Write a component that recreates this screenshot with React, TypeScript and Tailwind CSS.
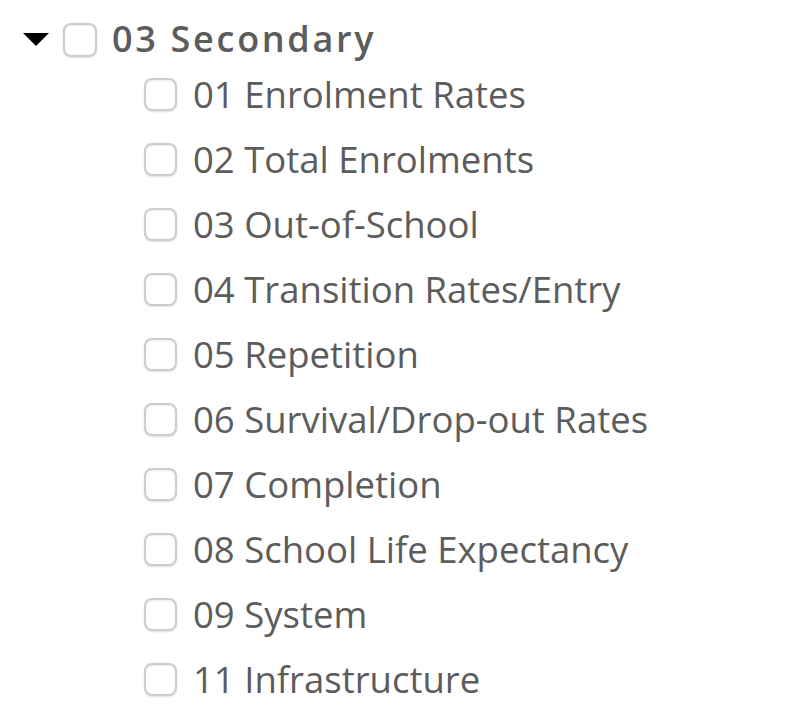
import React from "react";

const items = [
  "01 Enrolment Rates",
  "02 Total Enrolments",
  "03 Out-of-School",
  "04 Transition Rates/Entry",
  "05 Repetition",
  "06 Survival/Drop-out Rates",
  "07 Completion",
  "08 School Life Expectancy",
  "09 System",
  "11 Infrastructure",
];

function Box() {
  return (
    <span className="block w-[33px] h-[33px] shrink-0 rounded-[8px] border-2 border-[#cdcdcd] bg-white shadow-[0_1px_2px_rgba(0,0,0,0.12),inset_0_1px_2px_rgba(0,0,0,0.08)]" />
  );
}

export default function App() {
  return (
    <div className="w-[812px] h-[720px] bg-white text-[#5c5c5c] font-['Open_Sans',sans-serif]">
      <div className="flex items-center h-[34px] pt-0 mt-[23px]">
        <svg width="26" height="14" viewBox="0 0 26 14" className="ml-[23px] mr-[14px] shrink-0">
          <polygon points="0,0 26,0 13,13" fill="#000" />
        </svg>
        <span className="block w-[34px] h-[34px] shrink-0 rounded-[8px] border-2 border-[#cdcdcd] bg-white shadow-[0_1px_2px_rgba(0,0,0,0.12),inset_0_1px_2px_rgba(0,0,0,0.08)]" />
        <span className="ml-[15px] -mt-[3px] text-[36px] font-semibold tracking-[2.7px] leading-none">03 Secondary</span>
      </div>
      <ul className="ml-[144px] mt-[5px]">
        {items.map((t) => (
          <li key={t} className="flex items-center h-[65px]">
            <Box />
            <span className="ml-[16px] -mt-[1px] text-[36.5px] leading-none">{t}</span>
          </li>
        ))}
      </ul>
    </div>
  );
}
